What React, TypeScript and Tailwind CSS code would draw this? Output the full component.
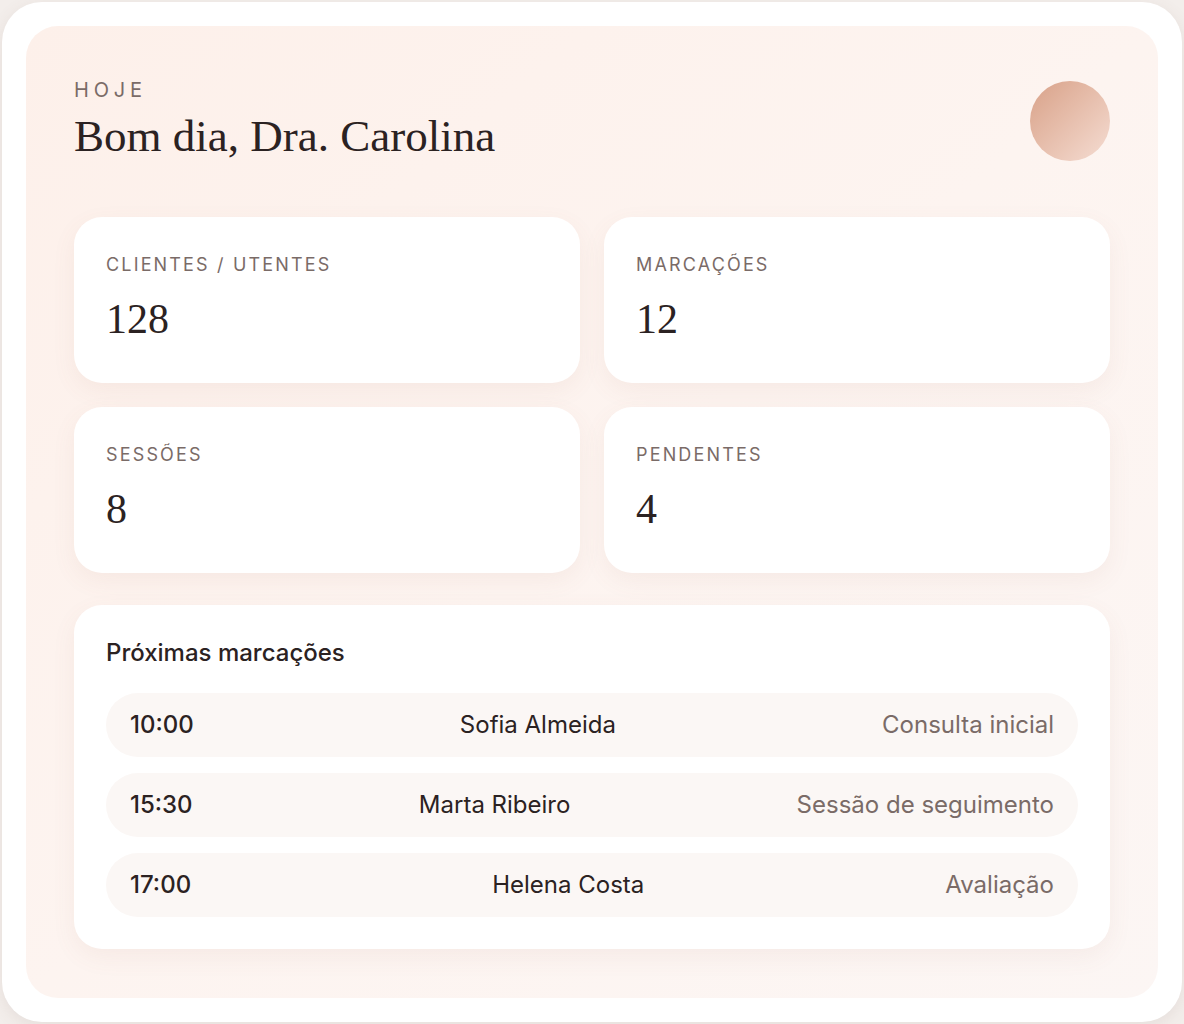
const stats = [
  { label: 'Clientes / Utentes', value: '128' },
  { label: 'Marcações', value: '12' },
  { label: 'Sessões', value: '8' },
  { label: 'Pendentes', value: '4' },
]

const appointments = [
  { time: '10:00', name: 'Sofia Almeida', type: 'Consulta inicial' },
  { time: '15:30', name: 'Marta Ribeiro', type: 'Sessão de seguimento' },
  { time: '17:00', name: 'Helena Costa', type: 'Avaliação' },
]

const sans = "font-['Inter','Noto_Sans',sans-serif]"
const serif = "font-['Liberation_Serif','DejaVu_Serif',serif]"

export default function App() {
  return (
    <div className={`min-h-screen bg-[#f3eeeb] p-[2px] ${sans}`}>
      <div className="h-[1020px] rounded-[40px] bg-white p-6 shadow-[0_4px_16px_rgba(120,90,80,0.10)]">
        <div className="h-full rounded-[32px] bg-gradient-to-br from-[#fdf0ea] via-[#fdf4f0] to-[#fcf6f4] p-12">
          <div className="mb-[54px] flex items-start justify-between pt-[2px]">
            <div>
              <p className="text-[20px] leading-7 uppercase tracking-[0.24em] text-[#7a6b67]">Hoje</p>
              <h1 className={`mt-[5px] text-[45px] leading-[1.2] text-[#2b2222] ${serif}`}>Bom dia, Dra. Carolina</h1>
            </div>
            <div className="mt-[5px] h-20 w-20 rounded-full bg-gradient-to-br from-[#d8a188] to-[#f5ddd3]" />
          </div>

          <div className="grid grid-cols-2 gap-6">
            {stats.map((s) => (
              <div
                key={s.label}
                className="h-[166px] rounded-[28px] bg-white px-8 pt-[34px] shadow-[0_8px_24px_rgba(150,100,80,0.07)]"
              >
                <p className="text-[18px] leading-[27px] uppercase tracking-[0.12em] text-[#7a6b67]">{s.label}</p>
                <p className={`mt-[20px] text-[42px] leading-none text-[#2b2222] ${serif}`}>{s.value}</p>
              </div>
            ))}
          </div>

          <div className="mt-8 rounded-[28px] bg-white p-8 shadow-[0_8px_24px_rgba(150,100,80,0.07)]">
            <h2 className="text-[24px] leading-8 font-medium text-[#2b2222]">Próximas marcações</h2>
            <div className="mt-6 flex flex-col gap-4">
              {appointments.map((a) => (
                <div
                  key={a.time}
                  className="flex h-16 items-center justify-between rounded-full bg-[#fbf7f5] px-6 text-[24px]"
                >
                  <span className="font-medium text-[#2b2222]">{a.time}</span>
                  <span className="text-[#2b2222]">{a.name}</span>
                  <span className="text-[#7a6b67]">{a.type}</span>
                </div>
              ))}
            </div>
          </div>
        </div>
      </div>
    </div>
  )
}
